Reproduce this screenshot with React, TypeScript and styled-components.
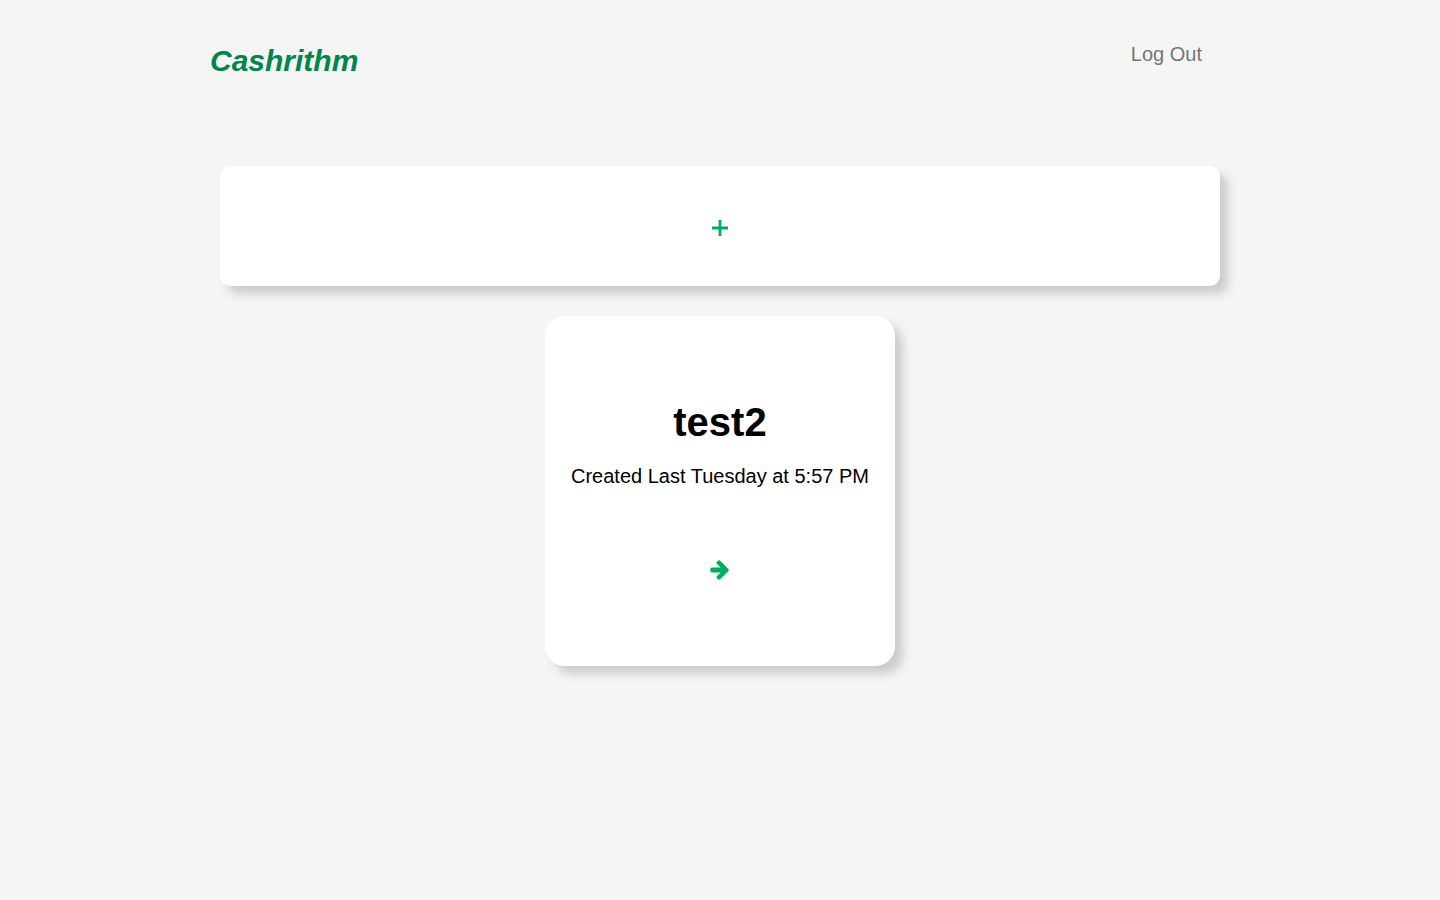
import React from "react";
import styled, { createGlobalStyle } from "styled-components";

const GlobalStyle = createGlobalStyle`
  * {
    box-sizing: border-box;
  }
  body {
    margin: 0;
    background: #f5f5f5;
    color: #000;
    font-family: Helvetica, "Liberation Sans", Arial, sans-serif;
    font-size: 20px;
    line-height: 24px;
  }
`;

const Page = styled.div`
  min-height: 100vh;
  padding-bottom: 40px;
`;

const Header = styled.header`
  display: flex;
  justify-content: space-between;
  align-items: flex-start;
  max-width: 1020px;
  margin: 0 auto;
  padding: 42px 28px 0 0;
`;

const Brand = styled.a`
  color: #00854a;
  font-size: 30px;
  font-style: italic;
  font-weight: 700;
  line-height: 38px;
  text-decoration: none;
`;

const LogOut = styled.button`
  border: 0;
  padding: 0;
  background: none;
  color: #757575;
  font: inherit;
  cursor: pointer;
`;

const Main = styled.main`
  display: flex;
  flex-direction: column;
  align-items: center;
  gap: 30px;
  max-width: 1000px;
  margin: 86px auto 0;
`;

const AddButton = styled.button`
  display: flex;
  align-items: center;
  justify-content: center;
  width: 100%;
  height: 120px;
  border: 0;
  border-radius: 10px;
  padding: 4px 0 0;
  background: #fff;
  box-shadow: 8px 8px 10px #ccc;
  color: #00ad5c;
  cursor: pointer;
`;

const BudgetCard = styled.article`
  display: flex;
  flex-direction: column;
  align-items: center;
  width: 350px;
  height: 350px;
  border-radius: 20px;
  padding-top: 82px;
  background: #fff;
  box-shadow: 8px 8px 10px #ccc;
`;

const BudgetName = styled.h2`
  margin: 0;
  font-size: 40px;
  line-height: 48px;
`;

const Created = styled.p`
  margin: 18px 0 0;
`;

const OpenLink = styled.a`
  display: flex;
  margin-top: 72px;
  color: #00ad5c;
`;

export default function App() {
  return (
    <Page>
      <GlobalStyle />
      <Header>
        <Brand href="#">Cashrithm</Brand>
        <LogOut type="button">Log Out</LogOut>
      </Header>
      <Main>
        <AddButton type="button" aria-label="Add budget">
          <svg width="16" height="16" viewBox="0 0 16 16" aria-hidden="true">
            <path d="M8 0v16M0 8h16" fill="none" stroke="currentColor" strokeWidth="2.8" />
          </svg>
        </AddButton>
        <BudgetCard>
          <BudgetName>test2</BudgetName>
          <Created>Created Last Tuesday at 5:57 PM</Created>
          <OpenLink href="#" aria-label="Open test2">
            <svg width="20" height="20" viewBox="-30 160 1600 1600" fill="currentColor" aria-hidden="true">
              <path d="M1472 960q0 54-37 91l-651 651q-39 37-91 37-51 0-90-37l-75-75q-38-38-38-91t38-91l293-293H117q-52 0-84.500-37.500T0 1024V896q0-53 32.500-90.500T117 768h704L528 474q-38-36-38-90t38-90l75-75q38-38 90-38 53 0 91 38l651 651q37 35 37 90z" />
            </svg>
          </OpenLink>
        </BudgetCard>
      </Main>
    </Page>
  );
}
